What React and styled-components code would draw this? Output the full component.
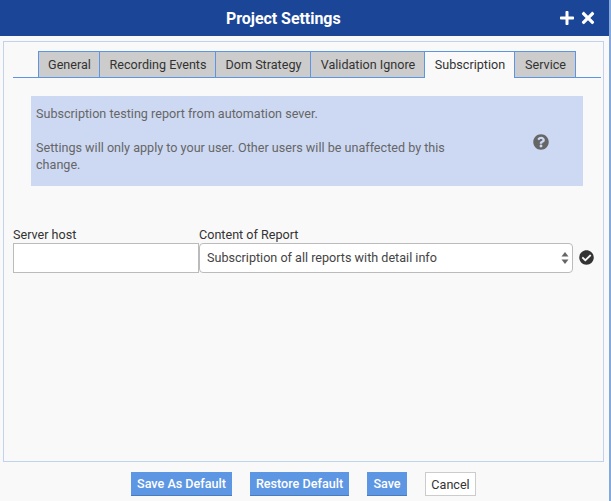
import React from "react";
import styled, { createGlobalStyle } from "styled-components";
import { FaPlus, FaTimes, FaQuestionCircle, FaCheckCircle } from "react-icons/fa";

const Global = createGlobalStyle`
  html, body { margin: 0; padding: 0; background: #f9f9f9; }
  body { font-family: Roboto, "Liberation Sans", sans-serif; }
  * { box-sizing: border-box; }
`;

const Dialog = styled.div`
  width: 611px;
  height: 501px;
  display: flex;
  flex-direction: column;
  background: #f9f9f9;
  border-right: 2px solid #86a8da;
  overflow: hidden;
`;

const Header = styled.header`
  flex: none;
  height: 36px;
  background: #1b4698;
  color: #fff;
  display: flex;
  align-items: center;
  padding: 0 12px 0 226px;
`;

const Title = styled.h1`
  margin: 0;
  font-size: 16px;
  font-weight: 700;
  letter-spacing: -0.05px;
`;

const HeaderIcons = styled.div`
  margin-left: auto;
  display: flex;
  align-items: center;
  gap: 4px;
  font-size: 16px;
  svg:last-child { font-size: 18px; }
`;

const Panel = styled.main`
  flex: none;
  height: 421px;
  margin: 5px 5px 0 3px;
  border: 1px solid #c0d2ec;
  padding: 9px 2px 0 9px;
  display: flex;
  flex-direction: column;
`;

const Tabs = styled.nav`
  display: flex;
  height: 27px;
  padding-left: 25px;
  border-bottom: 1px solid #5d96e0;
`;

const Tab = styled.div`
  height: ${(p) => (p.$active ? "27px" : "26px")};
  width: ${(p) => p.$w}px;
  padding: ${(p) => (p.$active ? "0 0 1px 1px" : "0 0 0 1px")};
  background: ${(p) => (p.$active ? "#f9f9f9" : "#cccccc")};
  border: 1px solid #5d96e0;
  border-left-width: ${(p) => (p.$first ? "1px" : "0")};
  border-bottom: 0;
  color: #333;
  font-size: 12.6px;
  display: flex;
  align-items: center;
  justify-content: center;
`;

const Info = styled.section`
  width: 552px;
  height: 90px;
  margin: 18px 0 0 18px;
  padding: 9px 5px;
  background: #cdd9f3;
  color: #666;
  font-size: 12.6px;
  line-height: 17px;
  display: flex;
  align-items: center;
  justify-content: space-between;
`;

const InfoText = styled.div`
  width: 425px;
  align-self: flex-start;
  p { margin: 0 0 17px; }
  p:last-child { margin: 0; }
`;

const Help = styled.span`
  display: flex;
  color: #666;
  font-size: 16px;
  margin: 2px 29px 0 0;
`;

const Form = styled.form`
  display: flex;
  align-items: flex-end;
  margin-top: 40px;
`;

const Field = styled.label`
  display: flex;
  flex-direction: column;
  width: ${(p) => p.$w}px;
  color: #333;
  font-size: 12.6px;
  line-height: 17px;
`;

const Input = styled.input`
  width: 100%;
  height: 30px;
  border: 1px solid #bbb;
  background: #fff;
  margin: 0;
  padding: 0 6px;
`;

const SelectBox = styled.div`
  position: relative;
  height: 30px;
  background: #fff;
  border: 1px solid #bbb;
  border-radius: 4px;
  padding: 0 0 1px 7px;
  display: flex;
  align-items: center;
  font-size: 12.6px;
  color: #444;
`;

const Stepper = styled.svg`
  position: absolute;
  right: 3px;
  top: 7px;
`;

const Check = styled.span`
  display: flex;
  color: #333;
  font-size: 15px;
  margin: 0 0 8px 6px;
`;

const Footer = styled.footer`
  display: flex;
  justify-content: flex-start;
  gap: 18px;
  padding: 10px 0 0 131px;
`;

const Button = styled.button`
  height: 24px;
  width: ${(p) => p.$w}px;
  padding: 0;
  border: 0;
  border-bottom: 1px solid #4a7cbd;
  background: #5d96e3;
  color: #fff;
  font: 500 12.6px Roboto, "Liberation Sans", sans-serif;
`;

const CancelButton = styled(Button)`
  background: #fff;
  color: #333;
  border: 1px solid #ccc;
  font-weight: 400;
`;

export default function App() {
  return (
    <Dialog>
      <Global />
      <Header>
        <Title>Project Settings</Title>
        <HeaderIcons>
          <FaPlus />
          <FaTimes />
        </HeaderIcons>
      </Header>
      <Panel>
        <Tabs>
          <Tab $w={62} $first>General</Tab>
          <Tab $w={116}>Recording Events</Tab>
          <Tab $w={95}>Dom Strategy</Tab>
          <Tab $w={114}>Validation Ignore</Tab>
          <Tab $w={90} $active>Subscription</Tab>
          <Tab $w={61}>Service</Tab>
        </Tabs>
        <Info>
          <InfoText>
            <p>Subscription testing report from automation sever.</p>
            <p>Settings will only apply to your user. Other users will be unaffected by this change.</p>
          </InfoText>
          <Help><FaQuestionCircle /></Help>
        </Info>
        <Form>
          <Field $w={186}>
            Server host
            <Input />
          </Field>
          <Field $w={374}>
            Content of Report
            <SelectBox>
              Subscription of all reports with detail info
              <Stepper width="8" height="14" viewBox="0 0 8 14">
                <path d="M4 1 L7.5 5.5 H0.5 Z M4 13 L0.5 8.5 H7.5 Z" fill="#666" />
              </Stepper>
            </SelectBox>
          </Field>
          <Check><FaCheckCircle /></Check>
        </Form>
      </Panel>
      <Footer>
        <Button $w={101}>Save As Default</Button>
        <Button $w={99}>Restore Default</Button>
        <Button $w={40}>Save</Button>
        <CancelButton $w={51}>Cancel</CancelButton>
      </Footer>
    </Dialog>
  );
}
